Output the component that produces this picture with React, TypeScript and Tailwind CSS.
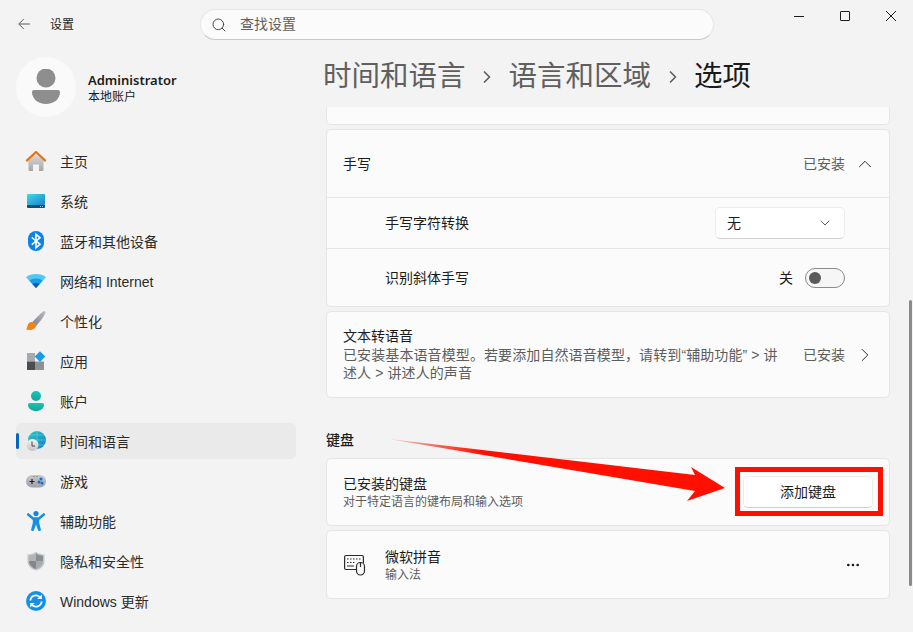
import { ChevronDown, ChevronRight, ChevronUp, Ellipsis, Search } from 'lucide-react';
import type { ReactNode } from 'react';

const HomeIcon = () => (
  <svg width="20" height="20" viewBox="0 0 20 20">
    <defs>
      <linearGradient id="homeBody" x1="0" y1="0" x2="0" y2="1">
        <stop offset="0" stopColor="#d9d9d9" />
        <stop offset="1" stopColor="#a8a8a8" />
      </linearGradient>
    </defs>
    <path d="M2.500 9.500 10 3l7.500 6.500V19a1 1 0 0 1-1 1h-3.500v-6.500H7V20H3.500a1 1 0 0 1-1-1Z" fill="url(#homeBody)" />
    <path d="M0.800 9.600 10 1l9.200 8.600" fill="none" stroke="#e8730c" strokeWidth="2.200" strokeLinecap="round" strokeLinejoin="round" />
  </svg>
);

const SystemIcon = () => (
  <svg width="20" height="20" viewBox="0 0 20 20">
    <defs>
      <linearGradient id="sysScreen" x1="0" y1="0" x2="1" y2="1">
        <stop offset="0" stopColor="#3ddcea" />
        <stop offset="1" stopColor="#1f7fc8" />
      </linearGradient>
    </defs>
    <rect x="1" y="3" width="18" height="11" rx="1" fill="url(#sysScreen)" />
    <path d="M1 14h18v2a1 1 0 0 1-1 1H2a1 1 0 0 1-1-1Z" fill="#0f4f78" />
    <rect x="14" y="15" width="1" height="1" fill="#9fd4ee" />
    <rect x="16" y="15" width="1" height="1" fill="#9fd4ee" />
  </svg>
);

const BluetoothIcon = () => (
  <svg width="20" height="20" viewBox="0 0 20 20">
    <rect x="2" y="0" width="16" height="20" rx="8" fill="#0a84e8" />
    <path d="M5.800 6.300 14 13.200 10 16.800V3.200L14 6.800 5.800 13.700" fill="none" stroke="#fff" strokeWidth="1.600" />
  </svg>
);

const WifiIcon = () => (
  <svg width="20" height="20" viewBox="0 0 20 20">
    <path d="M0 6.200C2.600 4 6 3 10 3s7.400 1 10 3.200L10 17Z" fill="#4fc8f4" />
    <path d="M3.400 9.800C5.200 8.400 7.400 7.600 10 7.600s4.800.8 6.600 2.200L10 17Z" fill="#1b9be8" />
    <path d="M6.400 13C7.400 12.300 8.600 11.900 10 11.900s2.600.4 3.600 1.100L10 17Z" fill="#0f5fae" />
  </svg>
);

const BrushIcon = () => (
  <svg width="20" height="20" viewBox="0 0 20 20">
    <defs>
      <linearGradient id="brushHandle" x1="0" y1="1" x2="1" y2="0">
        <stop offset="0" stopColor="#7d8289" />
        <stop offset="1" stopColor="#b8bcc0" />
      </linearGradient>
    </defs>
    <path d="M18.800 0.300c.7.300.9 1 .6 1.700C17.500 6 14 11 10 15L6 11.500C10 7 14 3 17.300.6c.5-.4 1-.5 1.500-.3Z" fill="url(#brushHandle)" />
    <path d="M6 11c-3 0-4 2-4.500 4-.3 1.500-.8 2.500-1.500 3.500 3 .9 7 .7 9-1.500 1.500-1.500 1.500-3.300.7-4.300Z" fill="#f0831c" />
  </svg>
);

const AppsIcon = () => (
  <svg width="20" height="20" viewBox="0 0 20 20">
    <rect x="1" y="2" width="8" height="8.500" fill="#a6a9ad" />
    <rect x="1" y="10.500" width="8" height="8.500" fill="#4a4c50" />
    <rect x="9" y="10.500" width="9" height="8.500" fill="#8e9196" />
    <path d="M14 0.300 19.300 5.600 14 10.900 8.700 5.600Z" fill="#1e9be8" />
  </svg>
);

const AccountIcon = () => (
  <svg width="20" height="20" viewBox="0 0 20 20">
    <defs>
      <linearGradient id="acct" x1="0" y1="0" x2="0" y2="1">
        <stop offset="0" stopColor="#1cc4b4" />
        <stop offset="1" stopColor="#12a89a" />
      </linearGradient>
    </defs>
    <circle cx="10" cy="5" r="5" fill="url(#acct)" />
    <path d="M2 14a2 2 0 0 1 2-2h12a2 2 0 0 1 2 2c0 3.500-3.500 6-8 6s-8-2.500-8-6Z" fill="url(#acct)" />
  </svg>
);

const TimeIcon = () => (
  <svg width="20" height="20" viewBox="0 0 20 20">
    <defs>
      <linearGradient id="globe" x1="0" y1="0" x2="1" y2="1">
        <stop offset="0" stopColor="#2cc7c0" />
        <stop offset="1" stopColor="#1480c8" />
      </linearGradient>
      <linearGradient id="clockFace" x1="0" y1="0" x2="0" y2="1">
        <stop offset="0" stopColor="#f4f4f4" />
        <stop offset="1" stopColor="#c4c4c4" />
      </linearGradient>
    </defs>
    <circle cx="11" cy="9" r="9" fill="url(#globe)" />
    <path d="M11 0v18M2 9h18M4 4h14M4 14h14" stroke="#6fd8dc" strokeWidth="0.500" fill="none" />
    <circle cx="6.500" cy="14" r="6" fill="url(#clockFace)" />
    <path d="M6 10.500V15h3" fill="none" stroke="#444" strokeWidth="1" />
  </svg>
);

const GameIcon = () => (
  <svg width="20" height="20" viewBox="0 0 20 20">
    <defs>
      <linearGradient id="pad" x1="0" y1="0" x2="0" y2="1">
        <stop offset="0" stopColor="#c6c8cc" />
        <stop offset="1" stopColor="#9fa2a8" />
      </linearGradient>
    </defs>
    <rect x="0" y="4" width="20" height="12.500" rx="6" fill="url(#pad)" />
    <path d="M3.500 10.500h5M6 8v5" stroke="#222" strokeWidth="1.200" />
    <path d="M7.500 5.500h1M10.500 5.500h1" stroke="#555" strokeWidth="0.800" />
    <circle cx="15" cy="8" r="1.500" fill="#0f6fd0" />
    <circle cx="13" cy="11" r="1.500" fill="#0f6fd0" />
    <circle cx="16" cy="12" r="1.500" fill="#0f6fd0" />
  </svg>
);

const AccessIcon = () => (
  <svg width="20" height="20" viewBox="0 0 20 20">
    <circle cx="10" cy="2.600" r="2.600" fill="#1586dc" />
    <path d="M2.200 3.500 7 7.500h6l4.800-4" fill="none" stroke="#1590e4" strokeWidth="2.600" strokeLinecap="round" strokeLinejoin="round" />
    <path d="M6.800 7h6.400v5l1.800 7c.2 1-2.400 1.500-2.800.5L10 13.500 7.800 19.500c-.4 1-3 .5-2.800-.5l1.800-7Z" fill="#1590e4" />
  </svg>
);

const ShieldIcon = () => (
  <svg width="20" height="20" viewBox="0 0 20 20">
    <path d="M10 0.800c2.500 1.800 5 2.500 8.500 2.700V10c0 4.500-3 7.800-8.500 9.500C4.500 17.800 1.500 14.500 1.500 10V3.500C5 3.300 7.500 2.600 10 0.800Z" fill="#c2c5c8" />
    <path d="M10 2.500c2.300 1.400 4.500 2 7 2.300V10h-7Z" fill="#8a8e94" />
    <path d="M10 2.500c-2.300 1.400-4.500 2-7 2.300V10h7Z" fill="#b0b3b7" />
    <path d="M3 10c0 3.800 2.500 6.500 7 8v-8Z" fill="#83878d" />
    <path d="M17 10c0 3.800-2.500 6.500-7 8v-8Z" fill="#a7aaaf" />
  </svg>
);

const UpdateIcon = () => (
  <svg width="20" height="20" viewBox="0 0 20 20">
    <circle cx="10" cy="10" r="10" fill="#1490e6" />
    <path d="M4.300 9.500A5.700 5.700 0 0 1 14.400 6.500M15.700 10.500A5.700 5.700 0 0 1 5.600 13.500" fill="none" stroke="#fff" strokeWidth="1.800" />
    <path d="M15.800 3.400v4.600h-4.600ZM4.200 16.600V12h4.600Z" fill="#fff" />
  </svg>
);

const navItems: { label: string; icon: ReactNode; active?: boolean }[] = [
  { label: '主页', icon: <HomeIcon /> },
  { label: '系统', icon: <SystemIcon /> },
  { label: '蓝牙和其他设备', icon: <BluetoothIcon /> },
  { label: '网络和 Internet', icon: <WifiIcon /> },
  { label: '个性化', icon: <BrushIcon /> },
  { label: '应用', icon: <AppsIcon /> },
  { label: '账户', icon: <AccountIcon /> },
  { label: '时间和语言', icon: <TimeIcon />, active: true },
  { label: '游戏', icon: <GameIcon /> },
  { label: '辅助功能', icon: <AccessIcon /> },
  { label: '隐私和安全性', icon: <ShieldIcon /> },
  { label: 'Windows 更新', icon: <UpdateIcon /> },
];

const Card = ({ className, children }: { className: string; children?: ReactNode }) => (
  <div className={`rounded-[5px] border border-[#e5e5e5] bg-[#fbfbfb] ${className}`}>{children}</div>
);

export default function App() {
  return (
    <div className="relative flex h-[632px] w-[913px] flex-col overflow-hidden bg-[#f3f3f3] font-['Liberation_Sans','Noto_Sans_CJK_SC',sans-serif] text-sm text-[#1b1b1b]">
      {/* title bar */}
      <header className="flex h-12 shrink-0 items-start">
        <div className="flex h-12 w-[200px] shrink-0 items-center pl-[18px]">
          <svg width="12" height="12" viewBox="0 0 12 12" fill="none" stroke="#5f5f5f" strokeWidth="1">
            <path d="M12 6H0.800M5.800 1 0.800 6l5 5" />
          </svg>
          <span className="ml-5 pt-px text-xs">设置</span>
        </div>
        <div className="mt-[9px] flex h-[31px] w-[514px] items-center rounded-full border border-[#e6e6e6] border-b-[#c9c9c9] bg-[#fbfbfb] pl-[10px]">
          <Search className="h-4 w-4 text-[#4a4a4a]" strokeWidth={1.500} />
          <span className="ml-[13px] pb-px text-[#5f5f5f]">查找设置</span>
        </div>
        <div className="ml-auto flex h-8">
          <div className="flex w-[46px] items-center justify-center">
            <div className="h-px w-[10px] bg-[#1b1b1b]" />
          </div>
          <div className="flex w-[46px] items-center justify-center">
            <div className="h-[10px] w-[10px] rounded-[1px] border border-[#1b1b1b]" />
          </div>
          <div className="flex w-[45px] items-center justify-center">
            <svg width="10" height="10" viewBox="0 0 10 10" stroke="#1b1b1b" strokeWidth="1">
              <path d="M0 0 10 10M10 0 0 10" />
            </svg>
          </div>
        </div>
      </header>

      <div className="flex min-h-0 flex-1">
        {/* sidebar */}
        <aside className="w-[323px] shrink-0 pl-4 pt-[9px]">
          <div className="flex items-center">
            <div className="flex h-[60px] w-[60px] items-center justify-center rounded-full bg-[#fafafa]">
              <svg width="30" height="36" viewBox="0 0 30 36" fill="#8e8e8e">
                <circle cx="15" cy="9" r="9.500" />
                <path d="M1 23a2 2 0 0 1 2-2h24a2 2 0 0 1 2 2c0 7-6 12-14 12S1 30 1 23Z" />
              </svg>
            </div>
            <div className="ml-3 pt-0.5">
              <div className="font-['Noto_Sans',sans-serif] text-[13px] leading-[18px] font-semibold">Administrator</div>
              <div className="text-xs leading-4">本地账户</div>
            </div>
          </div>
          <nav className="mt-[26px] flex w-[280px] flex-col gap-1">
            {navItems.map((item) => (
              <div key={item.label} className={`relative flex h-9 items-center rounded-[5px] ${item.active ? 'bg-[#eaeaea]' : ''}`}>
                {item.active && <div className="absolute left-0 top-[10px] h-4 w-[3px] rounded-full bg-[#0067c0]" />}
                <div className="ml-[10px] flex h-5 w-5 items-center justify-center">{item.icon}</div>
                <span className="ml-[14px] pt-px text-[#2b2b2b]">{item.label}</span>
              </div>
            ))}
          </nav>
        </aside>

        {/* main */}
        <main className="flex min-w-0 flex-1 flex-col">
          <div className="flex h-[59px] shrink-0 items-center gap-[11.500px] pb-0.5 text-[28.500px] text-[#5f5f5f]">
            <span>时间和语言</span>
            <ChevronRight className="h-5 w-5" strokeWidth={2} />
            <span>语言和区域</span>
            <ChevronRight className="h-5 w-5" strokeWidth={2} />
            <span className="text-[#1b1b1b]">选项</span>
          </div>

          <div className="ml-[3px] flex w-[564px] flex-col gap-1">
            <Card className="h-[18px] rounded-t-none border-t-0" />

            <Card className="h-[178px]">
              <div className="flex h-[68px] items-center border-b border-[#e5e5e5] pl-4 pr-[13px]">
                <span>手写</span>
                <span className="ml-auto text-[#5d5d5d]">已安装</span>
                <ChevronUp className="ml-[9px] h-[22px] w-[22px]" strokeWidth={1} />
              </div>
              <div className="flex h-[51px] items-center border-b border-[#e5e5e5] pl-[58px] pr-11">
                <span>手写字符转换</span>
                <div className="ml-auto flex h-8 w-[130px] items-center justify-between rounded-[5px] border border-[#ececec] border-b-[#d0d0d0] bg-white pl-[11px] pr-[11px]">
                  <span>无</span>
                  <ChevronDown className="h-4 w-4 text-[#5d5d5d]" strokeWidth={1.500} />
                </div>
              </div>
              <div className="flex h-[57px] items-center pl-[58px] pr-11">
                <span>识别斜体手写</span>
                <span className="ml-auto">关</span>
                <div className="ml-3 flex h-5 w-10 items-center rounded-full border border-[#8a8a8a] bg-[#f6f6f6] pl-[3px]">
                  <div className="h-3 w-3 rounded-full bg-[#5a5a5a]" />
                </div>
              </div>
            </Card>

            <Card className="flex h-[87px] items-center pl-4 pr-[13px]">
              <div className="w-[440px]">
                <div className="leading-[19px]">文本转语音</div>
                <div className="leading-[18.500px] tracking-[0.100px] text-[#5d5d5d]">
                  已安装基本语音模型。若要添加自然语音模型，请转到“辅助功能” &gt; 讲
                  <br />
                  述人 &gt; 讲述人的声音
                </div>
              </div>
              <span className="ml-auto text-[#5d5d5d]">已安装</span>
              <ChevronRight className="ml-[9px] h-[22px] w-[22px]" strokeWidth={1} />
            </Card>

            <div className="mb-[3px] mt-[27px] h-[22px] leading-[22px] font-medium">键盘</div>

            <Card className="flex h-[68px] items-center pl-4 pr-4">
              <div>
                <div className="leading-[19px]">已安装的键盘</div>
                <div className="text-xs leading-4 text-[#5d5d5d]">对于特定语言的键布局和输入选项</div>
              </div>
              <div className="ml-auto flex h-8 w-[130px] items-center justify-center rounded-[5px] border border-[#ececec] border-b-[#d0d0d0] bg-white">
                添加键盘
              </div>
            </Card>

            <Card className="flex h-[69px] items-center pl-[17px] pr-7">
              <svg width="22" height="22" viewBox="0 0 22 22" fill="none" stroke="#2b2b2b" strokeWidth="1.200">
                <path d="M12 15.500H2A1.500 1.500 0 0 1 .6 14V3A1.500 1.500 0 0 1 2 1.500h16A1.500 1.500 0 0 1 19.400 3v6" />
                <path d="M3 5h1.500M6 5h1.500M9 5h1.500M12 5h1.500M15 5h1.500M3 8.500h1.500M6 8.500h1.500M9 8.500h1.500M3 12h7" />
                <rect x="12.500" y="8.500" width="8" height="12.500" rx="4" fill="#fbfbfb" />
                <path d="M16.500 8.500v4.500" />
              </svg>
              <div className="ml-[19px] pt-[3px]">
                <div className="leading-[19px]">微软拼音</div>
                <div className="text-xs leading-[17px] text-[#5d5d5d]">输入法</div>
              </div>
              <Ellipsis className="ml-auto h-4 w-4" strokeWidth={2} />
            </Card>
          </div>
        </main>
      </div>

      {/* scrollbar */}
      <div className="absolute left-[909px] top-[300px] h-[286px] w-[3px] rounded-full bg-[#8a8a8a]" />

      {/* red annotation over the button */}
      <div className="absolute left-[735px] top-[467px] h-[49px] w-[148px] border-[5px] border-[#ff0f00]" />
      <svg className="absolute left-0 top-0" width="913" height="632" viewBox="0 0 913 632">
        <defs>
          <linearGradient id="arrowTail" x1="388" y1="438" x2="480" y2="455" gradientUnits="userSpaceOnUse">
            <stop offset="0" stopColor="#ff1000" stopOpacity="0.2" />
            <stop offset="1" stopColor="#ff1000" />
          </linearGradient>
        </defs>
        <path d="M389 439 695 475 691 467 725 488 687 501 695 491Z" fill="url(#arrowTail)" />
      </svg>
    </div>
  );
}
